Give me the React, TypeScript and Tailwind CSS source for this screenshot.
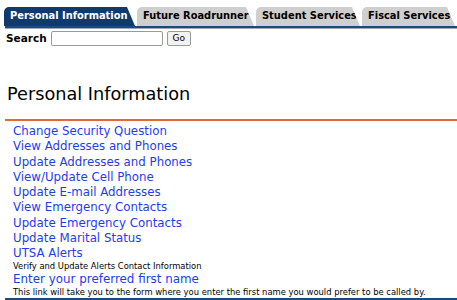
const tabs = [
  { label: "Personal Information", active: true, w: "w-[131px]" },
  { label: "Future Roadrunner", active: false, w: "w-[117px]" },
  { label: "Student Services", active: false, w: "w-[104px]" },
  { label: "Fiscal Services", active: false, w: "w-[93px]" },
];

const links = [
  "Change Security Question",
  "View Addresses and Phones",
  "Update Addresses and Phones",
  "View/Update Cell Phone",
  "Update E-mail Addresses",
  "View Emergency Contacts",
  "Update Emergency Contacts",
  "Update Marital Status",
  "UTSA Alerts",
];

export default function App() {
  return (
    <div className="w-[457px] h-[300px] overflow-hidden bg-white font-['DejaVu_Sans',Verdana,sans-serif] text-black">
      {/* tabs */}
      <div className="flex items-end gap-[2px] pl-[4px] pt-[7px]">
        {tabs.map((t) => (
          <div
            key={t.label}
            className={
              t.w +
              " h-[19px] pl-[6px] rounded-tl-[5px] [clip-path:polygon(0_0,calc(100%-8px)_0,100%_100%,0_100%)] flex items-center text-[9.9px] font-bold whitespace-nowrap " +
              (t.active ? "bg-[#0f3a6b] text-white" : "bg-[#cfcfcf] text-black")
            }
          >
            {t.label}
          </div>
        ))}
      </div>
      <div className="ml-[5px] h-[3px] bg-[#1d4a7c] border-b border-[#9aa9bb]" />

      {/* search */}
      <div className="flex items-center h-[17px] pl-[6px] mt-[1px]">
        <span className="text-[10.5px] font-bold">Search</span>
        <input className="ml-[4px] w-[112px] h-[15px] border border-[#9a9a9a] rounded-[2px] bg-white" />
        <button className="ml-[4px] h-[15px] w-[24px] text-[9px] border border-[#9a9a9a] rounded-[2px] bg-[#f2f2f2] leading-none">
          Go
        </button>
      </div>

      {/* heading */}
      <h1 className="pl-[7px] mt-[36px] text-[17.7px] leading-[22px] font-normal">Personal Information</h1>
      <div className="ml-[5px] mt-[14px] h-[2px] bg-[#e0693a]" />

      {/* links */}
      <div className="pl-[13px] pt-[3px] flex flex-col">
        {links.map((l) => (
          <a key={l} href="#" className="text-[11.8px] leading-[15.25px] text-[#1f3cf0]">
            {l}
          </a>
        ))}
        <span className="text-[8.4px] leading-[11px]">Verify and Update Alerts Contact Information</span>
        <a href="#" className="text-[11.9px] leading-[15px] text-[#1f3cf0]">Enter your preferred first name</a>
        <span className="text-[8.4px] leading-[10px]">This link will take you to the form where you enter the first name you would prefer to be called by.</span>
      </div>
      <div className="ml-[5px] mt-[1px] h-[3px] bg-[#1d4a7c]" />
    </div>
  );
}
